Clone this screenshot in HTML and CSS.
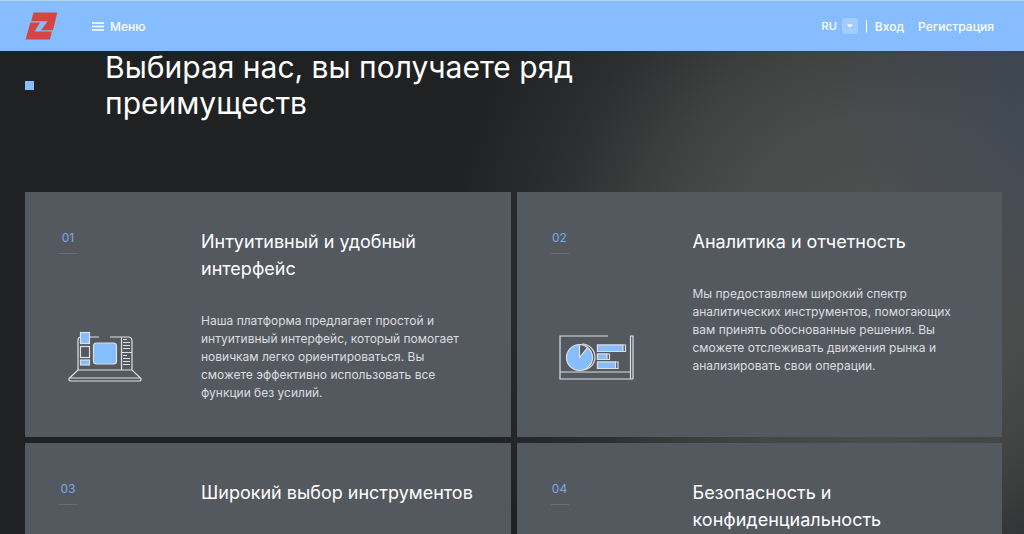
FILE: index.html
```html
<!DOCTYPE html>
<html lang="ru">
<head>
<meta charset="utf-8">
<meta name="viewport" content="width=device-width, initial-scale=1">
<title>Преимущества</title>
<link rel="stylesheet" href="styles.css">
</head>
<body>
<header class="header">
  <a class="logo" href="#" aria-label="Главная">
    <svg width="34" height="28" viewBox="0 0 34 28" aria-hidden="true">
      <path fill="#d64545" d="M8.500 0.600H32.300L28 18.200H16L22.500 9.300H6.300Z"/>
      <path fill="#d64545" d="M5.300 10.600H15L9.700 19.500H26.800L25 27.500H0.600Z"/>
    </svg>
  </a>
  <button class="menu" type="button">
    <svg width="12" height="9" viewBox="0 0 12 9" aria-hidden="true"><path d="M0 1H12M0 4.500H12M0 8H12" stroke="#fff" stroke-width="1.600"/></svg>
    Меню
  </button>
  <nav class="account">
    <button class="lang" type="button">RU
      <span class="lang-arrow"><svg width="6" height="4" viewBox="0 0 6 4" aria-hidden="true"><path d="M0 0.500H6L3 3.500Z" fill="#fff"/></svg></span>
    </button>
    <span class="divider"></span>
    <a class="link" href="#">Вход</a>
    <a class="link" href="#">Регистрация</a>
  </nav>
</header>
<main class="benefits">
  <div class="intro">
    <span class="marker"></span>
    <h1 class="heading">Выбирая нас, вы получаете ряд преимуществ</h1>
  </div>
  <div class="cards">
    <article class="card">
      <div class="side">
        <span class="number">01</span>
        <svg class="picture" viewBox="0 0 92 92" fill="none" stroke="#dedfe1" stroke-width="1.200" aria-hidden="true">
          <path d="M19 60V30Q19 27 22 27H40M51 27H69Q73 27 73 31V60M19 60H73L82 68.500V70Q82 71 80 71H12Q10 71 10 70V68.500L19 60M10 68H82M62.500 27V60M62.500 42.500H73"/>
          <path d="M64 29.500H68M64 32.500H71M64 35.500H71M64 38.500H71M64 45.500H68M64 48.500H71M64 51.500H71M64 54.500H71" stroke-width="1"/>
          <rect x="21.500" y="22.500" width="9" height="11" fill="#85bdff"/>
          <rect x="21.500" y="36.500" width="9" height="11"/>
          <rect x="21.500" y="50" width="9" height="5" fill="#85bdff"/>
          <rect x="34.500" y="33" width="23" height="21" rx="3" fill="#85bdff"/>
        </svg>
      </div>
      <div class="content">
        <h2 class="title">Интуитивный и удобный интерфейс</h2>
        <p class="text">Наша платформа предлагает простой и интуитивный интерфейс, который помогает новичкам легко ориентироваться. Вы сможете эффективно использовать все функции без усилий.</p>
      </div>
    </article>
    <article class="card">
      <div class="side">
        <span class="number">02</span>
        <svg class="picture" viewBox="0 0 92 92" fill="none" stroke="#dedfe1" stroke-width="1.200" aria-hidden="true">
          <path d="M57 26H9V69H82M9 62H79.500M79.500 69V26H82V69"/>
          <path d="M31 34A13 13 0 0 1 31 60"/>
          <circle cx="28.500" cy="47.500" r="13" fill="#85bdff"/>
          <path d="M28.500 47.500V34.500A13 13 0 0 1 36.500 37.500Z" fill="#54585f"/>
          <path d="M46.500 35H74.500V41.500H46.500ZM46.500 44H58.500V49.500H46.500ZM46.500 52H67V58.500H46.500Z"/>
          <path d="M46.500 35H72V41.500H46.500ZM46.500 44H56V49.500H46.500ZM46.500 52H64.500V58.500H46.500Z" fill="#85bdff"/>
        </svg>
      </div>
      <div class="content">
        <h2 class="title">Аналитика и отчетность</h2>
        <p class="text">Мы предоставляем широкий спектр аналитических инструментов, помогающих вам принять обоснованные решения. Вы сможете отслеживать движения рынка и анализировать свои операции.</p>
      </div>
    </article>
    <article class="card">
      <div class="side"><span class="number">03</span></div>
      <div class="content"><h2 class="title">Широкий выбор инструментов</h2></div>
    </article>
    <article class="card">
      <div class="side"><span class="number">04</span></div>
      <div class="content"><h2 class="title">Безопасность и конфиденциальность</h2></div>
    </article>
  </div>
</main>
</body>
</html>
```
FILE: styles.css
```css
* { box-sizing: border-box; }
body {
  margin: 0;
  min-height: 100vh;
  color: #fff;
  font-family: Inter, "Liberation Sans", sans-serif;
  background:
    radial-gradient(circle 240px at 106% 90px, rgba(62, 78, 98, 0.750), rgba(62, 78, 98, 0) 100%),
    radial-gradient(circle 440px at 86% 270px, #505151 0%, #4a4b4b 35%, #3f4040 54%, #2d2e2f 75%, #202122 100%) #202122;
}
button { padding: 0; border: 0; background: none; color: inherit; font: inherit; cursor: pointer; }
.header {
  position: fixed;
  top: 0;
  left: 0;
  right: 0;
  z-index: 1;
  display: flex;
  align-items: center;
  height: 51px;
  padding: 0 30px 0 25px;
  border-top: 1px solid #b3d1ee;
  background: #85bdff;
  font-size: 12px;
  font-weight: 500;
}
.logo { display: flex; margin-right: 33px; }
.menu { display: flex; align-items: center; gap: 6px; }
.account { display: flex; align-items: center; margin-left: auto; }
.lang { display: flex; align-items: center; gap: 5px; font-size: 11px; }
.lang-arrow {
  display: flex;
  align-items: center;
  justify-content: center;
  width: 16px;
  height: 16px;
  border-radius: 4px;
  background: #a0ccff;
}
.divider { width: 1px; height: 13px; margin: 0 8px; background: #fff; }
.link { color: inherit; text-decoration: none; }
.link + .link { margin-left: 14px; }
.benefits { padding: 49px 22px 25px 25px; }
.intro { display: flex; align-items: center; gap: 71px; margin-bottom: 71px; }
.marker { width: 9px; height: 9px; background: #85bdff; }
.heading { max-width: 500px; margin: 0; font-size: 30px; font-weight: 400; line-height: 36px; }
.cards { display: grid; grid-template-columns: 1fr 1fr; gap: 6px; }
.card {
  display: grid;
  grid-template-columns: 142px 1fr;
  padding: 36px 34px 35px;
  background: #54585f;
}
.side { display: flex; flex-direction: column; justify-content: space-between; align-items: flex-start; }
.number {
  width: 18px;
  padding-bottom: 6px;
  border-bottom: 1px solid #6b6d6f;
  color: #78aae6;
  font-size: 12px;
  line-height: 19px;
  text-align: center;
}
.picture { width: 92px; height: 92px; }
.title { margin: 0; font-size: 18px; font-weight: 400; line-height: 27px; }
.text { max-width: 264px; margin: 30px 0 0; color: #dcdde0; font-size: 12px; font-weight: 400; line-height: 18px; }
```
